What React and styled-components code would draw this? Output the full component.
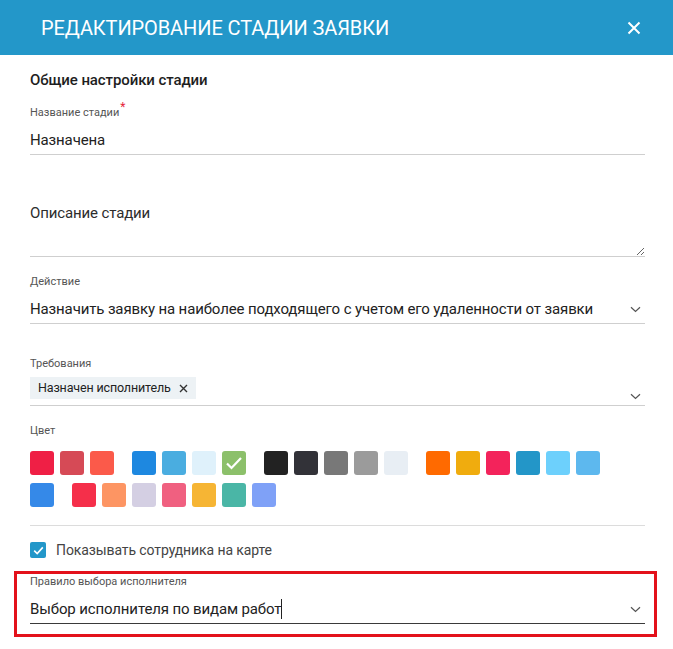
import React from 'react'
import styled, { createGlobalStyle } from 'styled-components'

const GlobalStyle = createGlobalStyle`
  html, body {
    margin: 0;
    padding: 0;
    background: #fff;
  }
  body {
    font-family: Roboto, 'Liberation Sans', sans-serif;
    color: #222;
  }
`

const Modal = styled.div`
  width: 673px;
  background: #fff;
`

const Header = styled.div`
  height: 55px;
  background: #2397c9;
  display: flex;
  align-items: center;
  justify-content: space-between;
  padding: 0 32px 0 41px;
  box-sizing: border-box;
  h1 {
    margin: 0;
    font-size: 20px;
    font-weight: 400;
    color: #fff;
    letter-spacing: -0.1px;
  }
`

const CloseButton = styled.button`
  border: 0;
  background: none;
  padding: 0;
  width: 14px;
  height: 14px;
  display: flex;
  cursor: pointer;
`

const Body = styled.div`
  padding: 15px 28px 0 30px;
  display: flex;
  flex-direction: column;
`

const SectionTitle = styled.div`
  font-size: 15px;
  line-height: 20px;
  font-weight: 500;
  color: #1e1e1e;
  letter-spacing: -0.1px;
`

const Field = styled.div`
  margin-top: ${props => props.$top || 0}px;
  display: flex;
  flex-direction: column;
`

const Label = styled.div`
  font-size: 11px;
  line-height: 14px;
  color: #555;
  sup {
    color: #e5253b;
    font-size: 12px;
    line-height: 0;
    margin-left: 1px;
  }
`

const InputRow = styled.div`
  display: flex;
  align-items: ${props => (props.$bottom ? 'flex-end' : 'center')};
  justify-content: space-between;
  padding: ${props => props.$pad || '10px 0 4px'};
  border-bottom: 1px solid ${props => (props.$active ? '#3a3a3a' : '#cfcfcf')};
  font-size: 15px;
  line-height: 20px;
  letter-spacing: -0.13px;
  color: #222;
`

const Caret = styled.span`
  display: inline-block;
  width: 1px;
  height: 20px;
  background: #222;
  vertical-align: top;
`

const Chevron = styled.svg`
  width: 11px;
  height: 7px;
  margin-right: 4px;
  flex-shrink: 0;
  margin-bottom: ${props => props.$lift || 0}px;
`

const TextArea = styled.textarea`
  margin-top: 48px;
  height: 53px;
  border: 0;
  border-bottom: 1px solid #cfcfcf;
  padding: 0;
  font-family: inherit;
  font-size: 15px;
  line-height: 20px;
  letter-spacing: -0.13px;
  color: #222;
  resize: vertical;
  outline: none;
  &::placeholder {
    color: #2c2c2c;
  }
`

const Chip = styled.span`
  display: inline-flex;
  align-items: center;
  gap: 8px;
  height: 22px;
  padding: 0 8px;
  background: #edf2f5;
  font-size: 12.5px;
  letter-spacing: -0.15px;
  color: #222;
`

const Palette = styled.div`
  margin-top: 13px;
  display: flex;
  flex-direction: column;
  gap: 8px;
`

const SwatchRow = styled.div`
  display: flex;
  gap: 6px;
`

const Swatch = styled.div`
  width: 24px;
  height: 24px;
  border-radius: 3px;
  background: ${props => props.$color};
  margin-left: ${props => (props.$group ? 12 : 0)}px;
  display: flex;
  align-items: center;
  justify-content: center;
`

const Divider = styled.div`
  margin-top: 18px;
  height: 1px;
  background: #dcdcdc;
`

const CheckRow = styled.label`
  margin-top: 16px;
  display: flex;
  align-items: center;
  gap: 10px;
  font-size: 14px;
  line-height: 16px;
  letter-spacing: -0.1px;
  color: #444;
`

const CheckBox = styled.span`
  width: 16px;
  height: 16px;
  border-radius: 2px;
  background: #2397c9;
  display: flex;
  align-items: center;
  justify-content: center;
`

const Highlight = styled.div`
  margin: 13px -12px 0 -16px;
  border: 3px solid #e3111b;
  padding: 1px 9px 10px 13px;
`

const rows = [
  [
    ['#ef1f45'], ['#d64a56'], ['#fb5a4a'],
    ['#1e88e0', true], ['#4aade0'], ['#dff1fb'], ['#8cc06a', false, true],
    ['#222222', true], ['#323238'], ['#787878'], ['#9b9b9b'], ['#e8eef4'],
    ['#ff6a00', true], ['#f0ac0e'], ['#f3235b'], ['#2396c8'], ['#6dd0fc'], ['#5db8ee']
  ],
  [
    ['#3589e8'],
    ['#f52f4a', true], ['#fd9563'], ['#d4cfe3'], ['#f06080'], ['#f6b534'], ['#4ab6a6'], ['#7fa1f7']
  ]
]

const ChevronIcon = ({ lift }) => (
  <Chevron viewBox='0 0 11 7' $lift={lift}>
    <path d='M1 1.2l4.5 4.3L10 1.2' fill='none' stroke='#555' strokeWidth='1.2' />
  </Chevron>
)

const App = () => {
  return (
    <Modal>
      <GlobalStyle />
      <Header>
        <h1>РЕДАКТИРОВАНИЕ СТАДИИ ЗАЯВКИ</h1>
        <CloseButton aria-label='Закрыть'>
          <svg width='14' height='14' viewBox='0 0 14 14'>
            <path d='M1.5 1.5l11 11M12.5 1.5l-11 11' stroke='#fff' strokeWidth='2' />
          </svg>
        </CloseButton>
      </Header>
      <Body>
        <SectionTitle>Общие настройки стадии</SectionTitle>

        <Field $top={16}>
          <Label>
            Название стадии<sup>*</sup>
          </Label>
          <InputRow>Назначена</InputRow>
        </Field>

        <TextArea placeholder='Описание стадии' />

        <Field $top={18}>
          <Label>Действие</Label>
          <InputRow>
            Назначить заявку на наиболее подходящего с учетом его удаленности от заявки
            <ChevronIcon />
          </InputRow>
        </Field>

        <Field $top={33}>
          <Label>Требования</Label>
          <InputRow $bottom $pad='6px 0 6px'>
            <Chip>
              Назначен исполнитель
              <svg width='9' height='9' viewBox='0 0 9 9'>
                <path d='M1 1l7 7M8 1L1 8' stroke='#333' strokeWidth='1.4' />
              </svg>
            </Chip>
            <ChevronIcon lift={-1} />
          </InputRow>
        </Field>

        <Field $top={18}>
          <Label>Цвет</Label>
          <Palette>
            {rows.map((row, i) => (
              <SwatchRow key={i}>
                {row.map(([color, group, checked], j) => (
                  <Swatch key={j} $color={color} $group={group}>
                    {checked && (
                      <svg width='18' height='14' viewBox='0 0 18 14'>
                        <path d='M2 7.5l4.5 4.5L16 2' fill='none' stroke='#fff' strokeWidth='2.2' />
                      </svg>
                    )}
                  </Swatch>
                ))}
              </SwatchRow>
            ))}
          </Palette>
        </Field>

        <Divider />

        <CheckRow>
          <CheckBox>
            <svg width='11' height='9' viewBox='0 0 11 9'>
              <path d='M1.2 4.6l3 3L9.8 1.4' fill='none' stroke='#fff' strokeWidth='1.6' />
            </svg>
          </CheckBox>
          Показывать сотрудника на карте
        </CheckRow>

        <Highlight>
          <Label>Правило выбора исполнителя</Label>
          <InputRow $active $pad='10px 0 4px'>
            <span>
              Выбор исполнителя по видам работ<Caret />
            </span>
            <ChevronIcon />
          </InputRow>
        </Highlight>
      </Body>
    </Modal>
  )
}

export default App
